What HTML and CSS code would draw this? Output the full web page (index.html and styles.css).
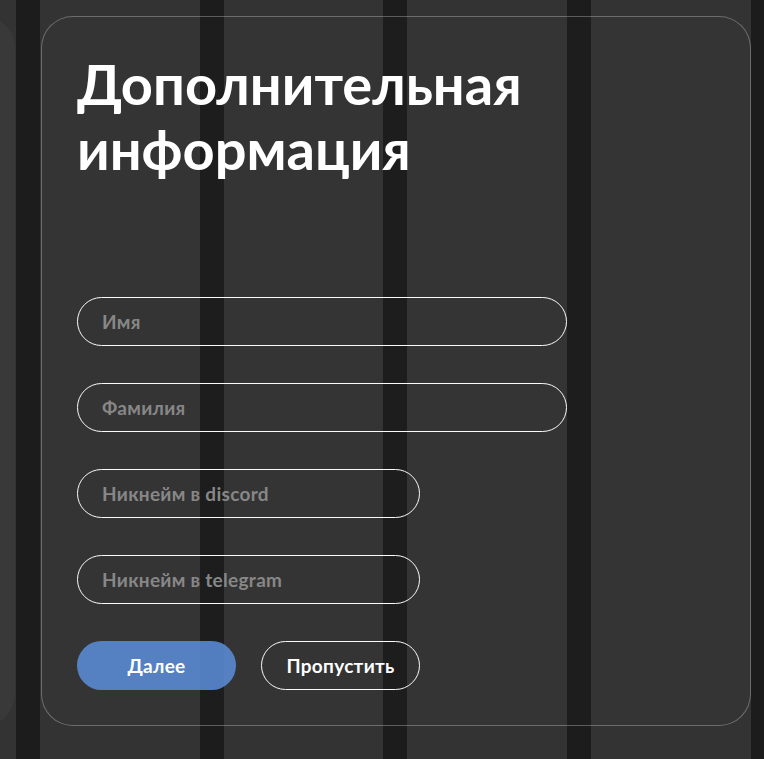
FILE: index.html
```
<!DOCTYPE html>
<html lang="ru">
<head>
<meta charset="utf-8">
<title>Дополнительная информация</title>
<link rel="stylesheet" href="styles.css">
</head>
<body>
<div class="track">
  <div class="card card-prev"></div>
  <form class="card card-main">
    <h1 class="title">Дополнительная информация</h1>
    <div class="fields">
      <input class="field field-wide" type="text" placeholder="Имя">
      <input class="field field-wide" type="text" placeholder="Фамилия">
      <input class="field field-narrow" type="text" placeholder="Никнейм в discord">
      <input class="field field-narrow" type="text" placeholder="Никнейм в telegram">
      <div class="actions">
        <button class="btn btn-primary" type="button">Далее</button>
        <button class="btn btn-outline" type="button">Пропустить</button>
      </div>
    </div>
  </form>
</div>
</body>
</html>
```
FILE: styles.css
```
* { box-sizing: border-box; }
html, body { margin: 0; padding: 0; height: 100%; }
body {
  overflow: hidden;
  background-color: #333333;
  background-image: linear-gradient(90deg,
    transparent 0 16px, #1c1c1c 16px 40px,
    transparent 40px 200px, #1c1c1c 200px 224px,
    transparent 224px 383px, #1c1c1c 383px 407px,
    transparent 407px 567px, #1c1c1c 567px 591px,
    transparent 591px 751px, #1c1c1c 751px 775px);
  background-size: 775px 100%;
  background-repeat: no-repeat;
  font-family: Lato, "Noto Sans", sans-serif;
  color: #fff;
}
.track {
  display: flex;
  gap: 26px;
  padding-top: 16px;
  margin-left: -695px;
}
.card {
  flex: none;
  width: 710px;
  height: 710px;
  border-radius: 32px;
}
.card-prev {
  background: rgba(255, 255, 255, 0.03);
}
.card-main {
  border: 1.5px solid rgba(255, 255, 255, 0.28);
  background: rgba(255, 255, 255, 0.008);
  padding: 34px 35px;
  display: flex;
  flex-direction: column;
}
.title {
  margin: 0;
  font-size: 56px;
  line-height: 65px;
  font-weight: 700;
  color: #fff;
  max-width: 500px;
}
.fields {
  margin-top: 116px;
  display: flex;
  flex-direction: column;
  gap: 37px;
  align-items: flex-start;
}
.field {
  height: 49px;
  border: 1.5px solid #fafafa;
  border-radius: 25px;
  background: transparent;
  padding: 0 24px;
  font-family: inherit;
  font-size: 19px;
  letter-spacing: 0.3px;
  font-weight: 700;
  color: #fff;
  outline: none;
}
.field::placeholder { color: #878787; opacity: 1; }
.field-wide { width: 490px; }
.field-narrow { width: 343px; }
.actions {
  display: flex;
  gap: 25px;
}
.btn {
  width: 159px;
  height: 49px;
  border-radius: 25px;
  font-family: inherit;
  font-size: 19px;
  letter-spacing: 0.3px;
  font-weight: 700;
  color: #fff;
  cursor: pointer;
}
.btn-primary {
  border: none;
  background: rgba(90, 140, 215, 0.88);
}
.btn-outline {
  border: 1.5px solid #fafafa;
  background: transparent;
}
```
